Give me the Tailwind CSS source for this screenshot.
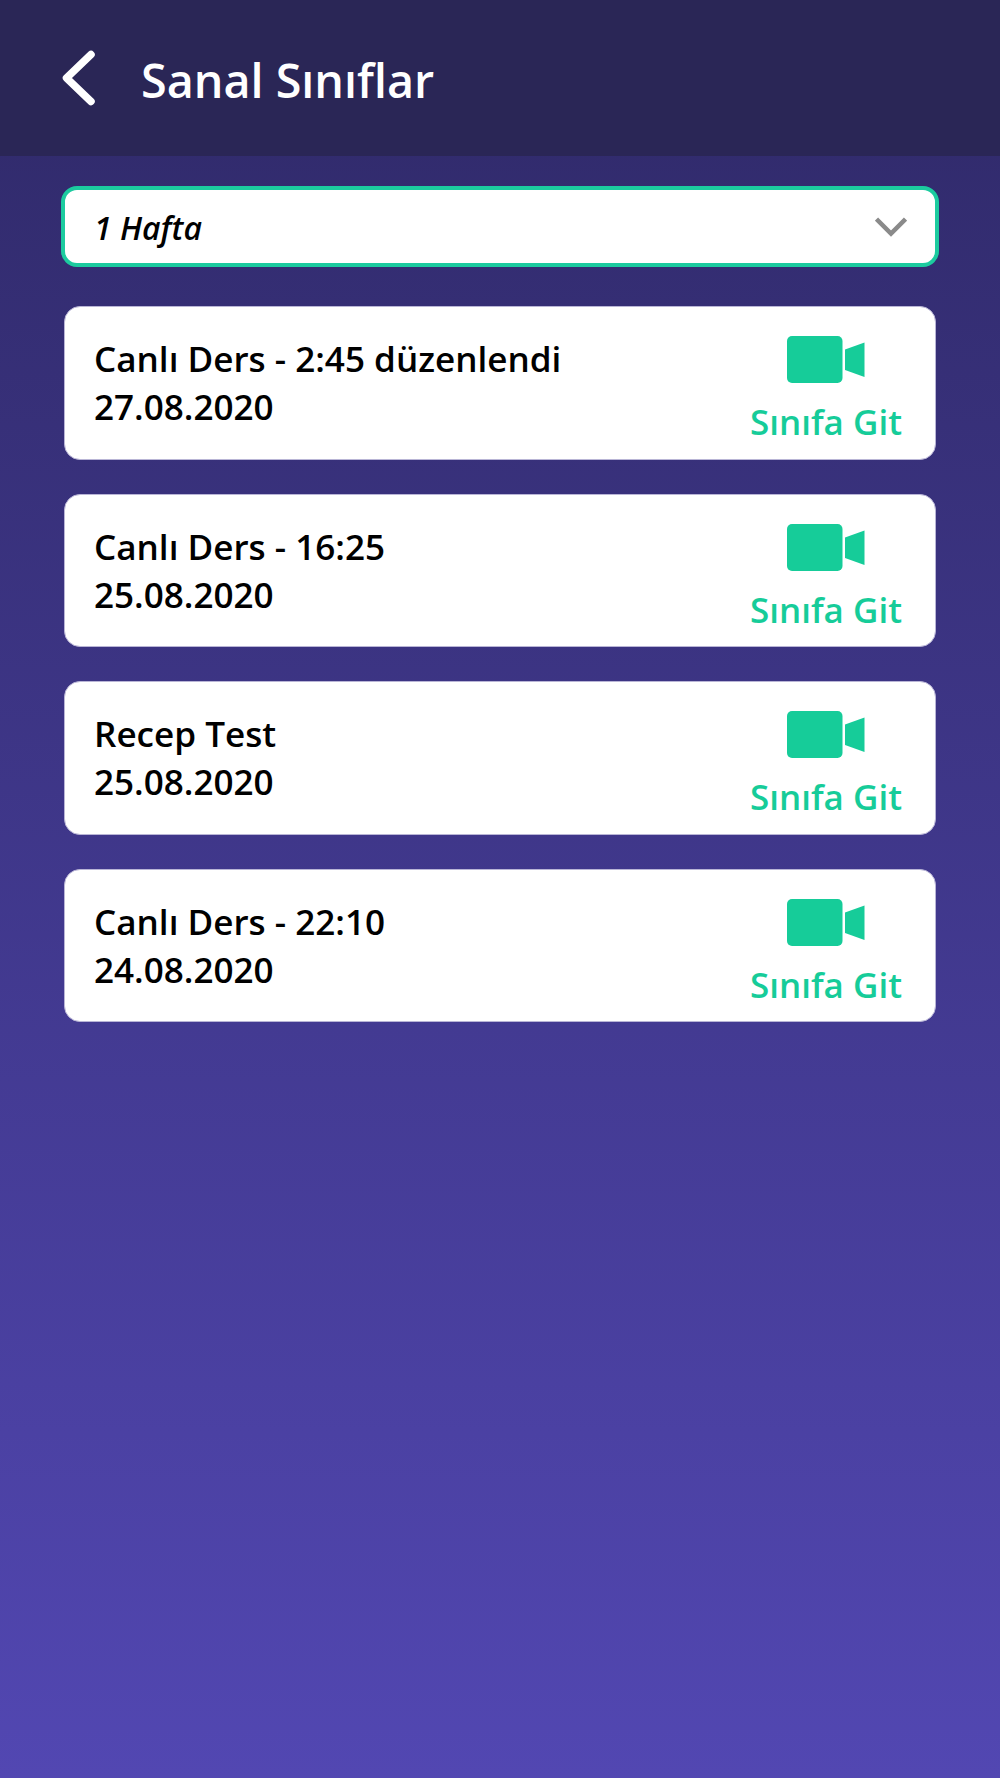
<!DOCTYPE html>
<html lang="en">
<head>
    <meta charset="UTF-8">
    <meta name="viewport" content="width=device-width, initial-scale=1.0">
    <title>Sanal Sınıflar</title>
    <script src="https://cdn.jsdelivr.net/npm/@tailwindcss/browser@4"></script>
</head>
<body class="h-[1778px] overflow-hidden bg-gradient-to-b from-[#2f2968] to-[#5247b2] font-['Open_Sans',sans-serif]">
    <!-- Header -->
    <header class="h-[156px] bg-[#2a2656] flex items-center pl-[61px]">
        <svg class="w-[36px] h-[58px]" viewBox="0 0 36 58" fill="none">
            <path d="M30 5.500 L5.500 29 L30 52.500" stroke="#fff" stroke-width="7.500" stroke-linecap="round" stroke-linejoin="round"/>
        </svg>
        <h1 class="ml-[44px] mt-[3px] text-[46.700px] leading-[60px] font-semibold text-white">Sanal Sınıflar</h1>
    </header>

    <main class="px-[61px] pt-[30px]">
        <!-- Week select -->
        <div class="h-[81px] bg-white border-[4px] border-[#1ccb9f] rounded-[16px] flex items-center justify-between pl-[29px] pr-[28px]">
            <span class="mt-[2px] text-[32px] font-semibold italic text-black">1 Hafta</span>
            <svg class="w-[32px] h-[20px]" viewBox="0 0 32 20" fill="none">
                <path d="M1.500 2 L16 16.500 L30.500 2" stroke="#8a8a8a" stroke-width="4.500"/>
            </svg>
        </div>

        <!-- Classes -->
        <div class="mt-[39px] px-[3px] flex flex-col gap-[34px]">
            <div class="h-[153.500px] bg-white rounded-[16px] border border-[#b9b5d6] flex justify-between pl-[29px] pr-[33px]">
                <div class="pt-[27px] text-[35.100px] leading-[48px] font-semibold text-black">
                    <p>Canlı Ders - 2:45 düzenlendi</p>
                    <p>27.08.2020</p>
                </div>
                <div class="flex flex-col items-center pt-[29px]">
                    <svg class="w-[79px] h-[47px]" viewBox="0 0 79 47" fill="#16cc99">
                        <rect x="1" y="0" width="55.500" height="47" rx="5"/>
                        <path d="M59 13.500 L78.500 6.500 V41 L59 34 Z"/>
                    </svg>
                    <span class="mt-[15px] text-[35px] leading-[48px] font-semibold text-[#16cc99]">Sınıfa Git</span>
                </div>
            </div>
            <div class="h-[153.500px] bg-white rounded-[16px] border border-[#b9b5d6] flex justify-between pl-[29px] pr-[33px]">
                <div class="pt-[27px] text-[35.100px] leading-[48px] font-semibold text-black">
                    <p>Canlı Ders - 16:25</p>
                    <p>25.08.2020</p>
                </div>
                <div class="flex flex-col items-center pt-[29px]">
                    <svg class="w-[79px] h-[47px]" viewBox="0 0 79 47" fill="#16cc99">
                        <rect x="1" y="0" width="55.500" height="47" rx="5"/>
                        <path d="M59 13.500 L78.500 6.500 V41 L59 34 Z"/>
                    </svg>
                    <span class="mt-[15px] text-[35px] leading-[48px] font-semibold text-[#16cc99]">Sınıfa Git</span>
                </div>
            </div>
            <div class="h-[153.500px] bg-white rounded-[16px] border border-[#b9b5d6] flex justify-between pl-[29px] pr-[33px]">
                <div class="pt-[27px] text-[35.100px] leading-[48px] font-semibold text-black">
                    <p>Recep Test</p>
                    <p>25.08.2020</p>
                </div>
                <div class="flex flex-col items-center pt-[29px]">
                    <svg class="w-[79px] h-[47px]" viewBox="0 0 79 47" fill="#16cc99">
                        <rect x="1" y="0" width="55.500" height="47" rx="5"/>
                        <path d="M59 13.500 L78.500 6.500 V41 L59 34 Z"/>
                    </svg>
                    <span class="mt-[15px] text-[35px] leading-[48px] font-semibold text-[#16cc99]">Sınıfa Git</span>
                </div>
            </div>
            <div class="h-[153.500px] bg-white rounded-[16px] border border-[#b9b5d6] flex justify-between pl-[29px] pr-[33px]">
                <div class="pt-[27px] text-[35.100px] leading-[48px] font-semibold text-black">
                    <p>Canlı Ders - 22:10</p>
                    <p>24.08.2020</p>
                </div>
                <div class="flex flex-col items-center pt-[29px]">
                    <svg class="w-[79px] h-[47px]" viewBox="0 0 79 47" fill="#16cc99">
                        <rect x="1" y="0" width="55.500" height="47" rx="5"/>
                        <path d="M59 13.500 L78.500 6.500 V41 L59 34 Z"/>
                    </svg>
                    <span class="mt-[15px] text-[35px] leading-[48px] font-semibold text-[#16cc99]">Sınıfa Git</span>
                </div>
            </div>
        </div>
    </main>
</body>
</html>
